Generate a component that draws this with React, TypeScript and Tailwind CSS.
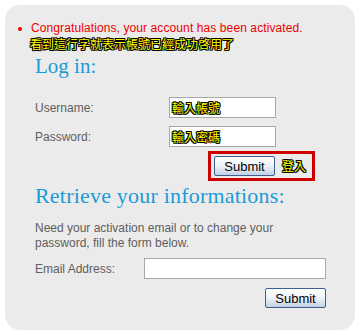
const outline =
  "text-[#ffff00] [text-shadow:1px_0_0_#000,-1px_0_0_#000,0_1px_0_#000,0_-1px_0_#000,1px_1px_0_#000,-1px_-1px_0_#000,1px_-1px_0_#000,-1px_1px_0_#000]";

const cjk = "font-['Noto_Sans_CJK_TC','Liberation_Sans',sans-serif]";

function SubmitButton() {
  return (
    <button className="w-[61px] h-[20px] rounded-[2px] border border-[#3d5f93] bg-gradient-to-b from-white via-[#eef2f8] to-[#c3cfe2] text-[13px] leading-none text-black">
      Submit
    </button>
  );
}

function Field({ label, labelWidth, inputWidth, hint }: { label: string; labelWidth: string; inputWidth: string; hint?: string }) {
  return (
    <div className="flex items-center">
      <span className={`${labelWidth} text-[12px] text-[#5e5e5e]`}>{label}</span>
      <div className={`${inputWidth} h-[21px] border border-[#a8a8a8] bg-white px-[2px] flex items-center`}>
        {hint && <span className={`${cjk} ${outline} text-[12px] leading-none`}>{hint}</span>}
      </div>
    </div>
  );
}

export default function App() {
  return (
    <div className="min-h-screen bg-white pt-[5px] pl-[5px] font-['Liberation_Sans',Arial,sans-serif]">
      <div className="w-[350px] h-[325px] rounded-[15px] bg-[#ebebeb] pt-[16px]">
        {/* message */}
        <div className="flex pl-[13px]">
          <span className="mt-[6px] w-[4px] h-[4px] rounded-full bg-[#ee0000]" />
          <div className="ml-[9px]">
            <p className="text-[12px] leading-[15px] tracking-[0.1px] text-[#ee0000]">Congratulations, your account has been activated.</p>
            <p className={`${cjk} ${outline} -ml-[1px] text-[12px] leading-[15px]`}>看到這行字就表示帳號已經成功啓用了</p>
          </div>
        </div>

        <div className="pl-[30px]">
          <h2 className="mt-[3px] font-['Liberation_Serif',serif] text-[21px] leading-[24px] text-[#1c9bd8]">Log in:</h2>

          <div className="mt-[19px]">
            <Field label="Username:" labelWidth="w-[134px]" inputWidth="w-[107px]" hint="輸入帳號" />
          </div>
          <div className="mt-[8px]">
            <Field label="Password:" labelWidth="w-[134px]" inputWidth="w-[107px]" hint="輸入密碼" />
          </div>

          <div className="mt-[4px] ml-[173px] w-[107px] h-[30px] border-[3px] border-[#cc0000] flex items-center pl-[3px]">
            <SubmitButton />
            <span className={`${cjk} ${outline} ml-[7px] text-[12px] leading-none`}>登入</span>
          </div>

          <h2 className="mt-[3px] font-['Liberation_Serif',serif] text-[22px] leading-[24px] tracking-[0.2px] text-[#1c9bd8]">Retrieve your informations:</h2>

          <p className="mt-[13px] w-[270px] text-[12px] leading-[15px] text-[#5e5e5e]">
            Need your activation email or to change your password, fill the form below.
          </p>

          <div className="mt-[7px]">
            <Field label="Email Address:" labelWidth="w-[109px]" inputWidth="w-[182px]" />
          </div>

          <div className="mt-[9px] w-[291px] flex justify-end">
            <SubmitButton />
          </div>
        </div>
      </div>
    </div>
  );
}
